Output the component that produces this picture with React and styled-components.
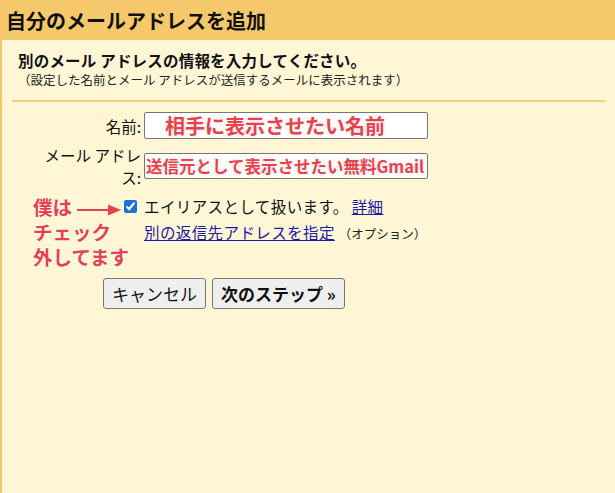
import React from "react";
import styled, { createGlobalStyle } from "styled-components";

const GlobalStyle = createGlobalStyle`
    html, body {
        margin: 0;
        padding: 0;
        background: #fff6d6;
    }
    body {
        font-family: "Noto Sans CJK JP", "Noto Sans", "Liberation Sans", sans-serif;
        color: #111;
    }
`;

const red = "#e8414b";

const Page = styled.div`
    position: relative;
    width: 615px;
    min-height: 493px;
    display: flex;
    flex-direction: column;
`;

// yellow title bar
const Header = styled.div`
    height: 40px;
    background: #f5c96b;
    display: flex;
    align-items: center;
    padding-left: 6px;
    font-size: 20px;
    font-weight: 700;
    color: #111;
`;

const Panel = styled.div`
    flex: 1;
    border-left: 2px solid #f3c86a;
    padding: 10px 10px 0;
`;

const Intro = styled.div`
    padding-left: 6px;
`;

const Lead = styled.div`
    font-size: 15.5px;
    font-weight: 700;
    line-height: 20px;
    letter-spacing: 0.2px;
`;

const Note = styled.div`
    font-size: 12.5px;
    line-height: 18px;
    margin-top: 1px;
    color: #222;
`;

const Divider = styled.hr`
    border: 0;
    height: 2px;
    background: #f0d07a;
    margin: 11px 0 10px;
`;

// label / field table
const Form = styled.div`
    display: grid;
    grid-template-columns: 100px 284px;
    column-gap: 3px;
    row-gap: 5px;
    margin-left: 29px;
    align-items: center;
    font-size: 15.5px;
`;

const Label = styled.div`
    text-align: right;
    line-height: 22px;
`;

const TextBox = styled.div`
    box-sizing: border-box;
    height: ${({ $h }) => $h}px;
    background: #fff;
    border: 1px solid #777;
    border-radius: 2px;
    display: flex;
    align-items: center;
    padding-left: ${({ $pad }) => $pad}px;
    font-size: ${({ $size }) => $size}px;
    font-weight: 700;
    color: ${red};
    white-space: nowrap;
    text-shadow: 0 0 2px #fff, 0 0 4px rgba(0, 0, 0, 0.15);
`;

const CheckCell = styled.div`
    align-self: start;
    display: flex;
    justify-content: flex-end;
    height: 26px;
    align-items: center;
`;

const Check = styled.input`
    width: 13px;
    height: 13px;
    margin: 0 4px 0 0;
    accent-color: #1d6fdc;
`;

const Line = styled.div`
    line-height: 26px;
    white-space: nowrap;
    letter-spacing: 0.4px;
`;

const Link = styled.a`
    color: #1a1aa6;
    text-decoration: underline;
    cursor: pointer;
    margin-left: ${({ $gap }) => ($gap ? "3px" : 0)};
`;

const Small = styled.span`
    font-size: 12.5px;
    letter-spacing: 0;
    color: #222;
    margin-left: 4px;
`;

const Actions = styled.div`
    display: flex;
    gap: 6px;
    margin: 31px 0 0 91px;
`;

const Button = styled.button`
    height: 31px;
    padding: 0 8px;
    background: #efefef;
    border: 1px solid #767676;
    border-radius: 3px;
    font-family: inherit;
    font-size: 17px;
    font-weight: ${({ $primary }) => ($primary ? 700 : 400)};
    color: #111;
`;

// red hand-written annotation laid over the form
const Annotation = styled.div`
    position: absolute;
    left: 33px;
    top: 195px;
    display: flex;
    flex-direction: column;
    gap: 1px;
    font-size: 19.5px;
    font-weight: 700;
    color: ${red};
    text-shadow: 0 0 2px #fff, 0 0 3px #fff;
`;

const NoteLine = styled.div`
    height: 24px;
    line-height: 24px;
    white-space: nowrap;
`;

const Arrow = styled.svg`
    position: absolute;
    left: 76px;
    top: 203px;
`;

export default function App() {
    return (
        <>
            <GlobalStyle />
            <Page>
                <Header>自分のメールアドレスを追加</Header>
                <Panel>
                    <Intro>
                        <Lead>別のメール アドレスの情報を入力してください。</Lead>
                        <Note>（設定した名前とメール アドレスが送信するメールに表示されます）</Note>
                    </Intro>
                    <Divider />
                    <Form>
                        <Label>名前:</Label>
                        <TextBox $h={27} $pad={20} $size={20}>
                            相手に表示させたい名前
                        </TextBox>
                        <Label>メール アドレス:</Label>
                        <TextBox $h={26} $pad={1} $size={16.5}>
                            送信元として表示させたい無料Gmail
                        </TextBox>
                        <CheckCell>
                            <Check type="checkbox" defaultChecked />
                        </CheckCell>
                        <div>
                            <Line>
                                エイリアスとして扱います。<Link $gap>詳細</Link>
                            </Line>
                            <Line>
                                <Link>別の返信先アドレスを指定</Link>
                                <Small>（オプション）</Small>
                            </Line>
                        </div>
                    </Form>
                    <Actions>
                        <Button>キャンセル</Button>
                        <Button $primary>次のステップ »</Button>
                    </Actions>
                </Panel>
                <Annotation>
                    <NoteLine>僕は</NoteLine>
                    <NoteLine>チェック</NoteLine>
                    <NoteLine>外してます</NoteLine>
                </Annotation>
                <Arrow width="46" height="14" viewBox="0 0 46 14">
                    <line x1="1" y1="7" x2="34" y2="7" stroke={red} strokeWidth="2" />
                    <polygon points="32,1.5 45,7 32,12.5" fill={red} />
                </Arrow>
            </Page>
        </>
    );
}
